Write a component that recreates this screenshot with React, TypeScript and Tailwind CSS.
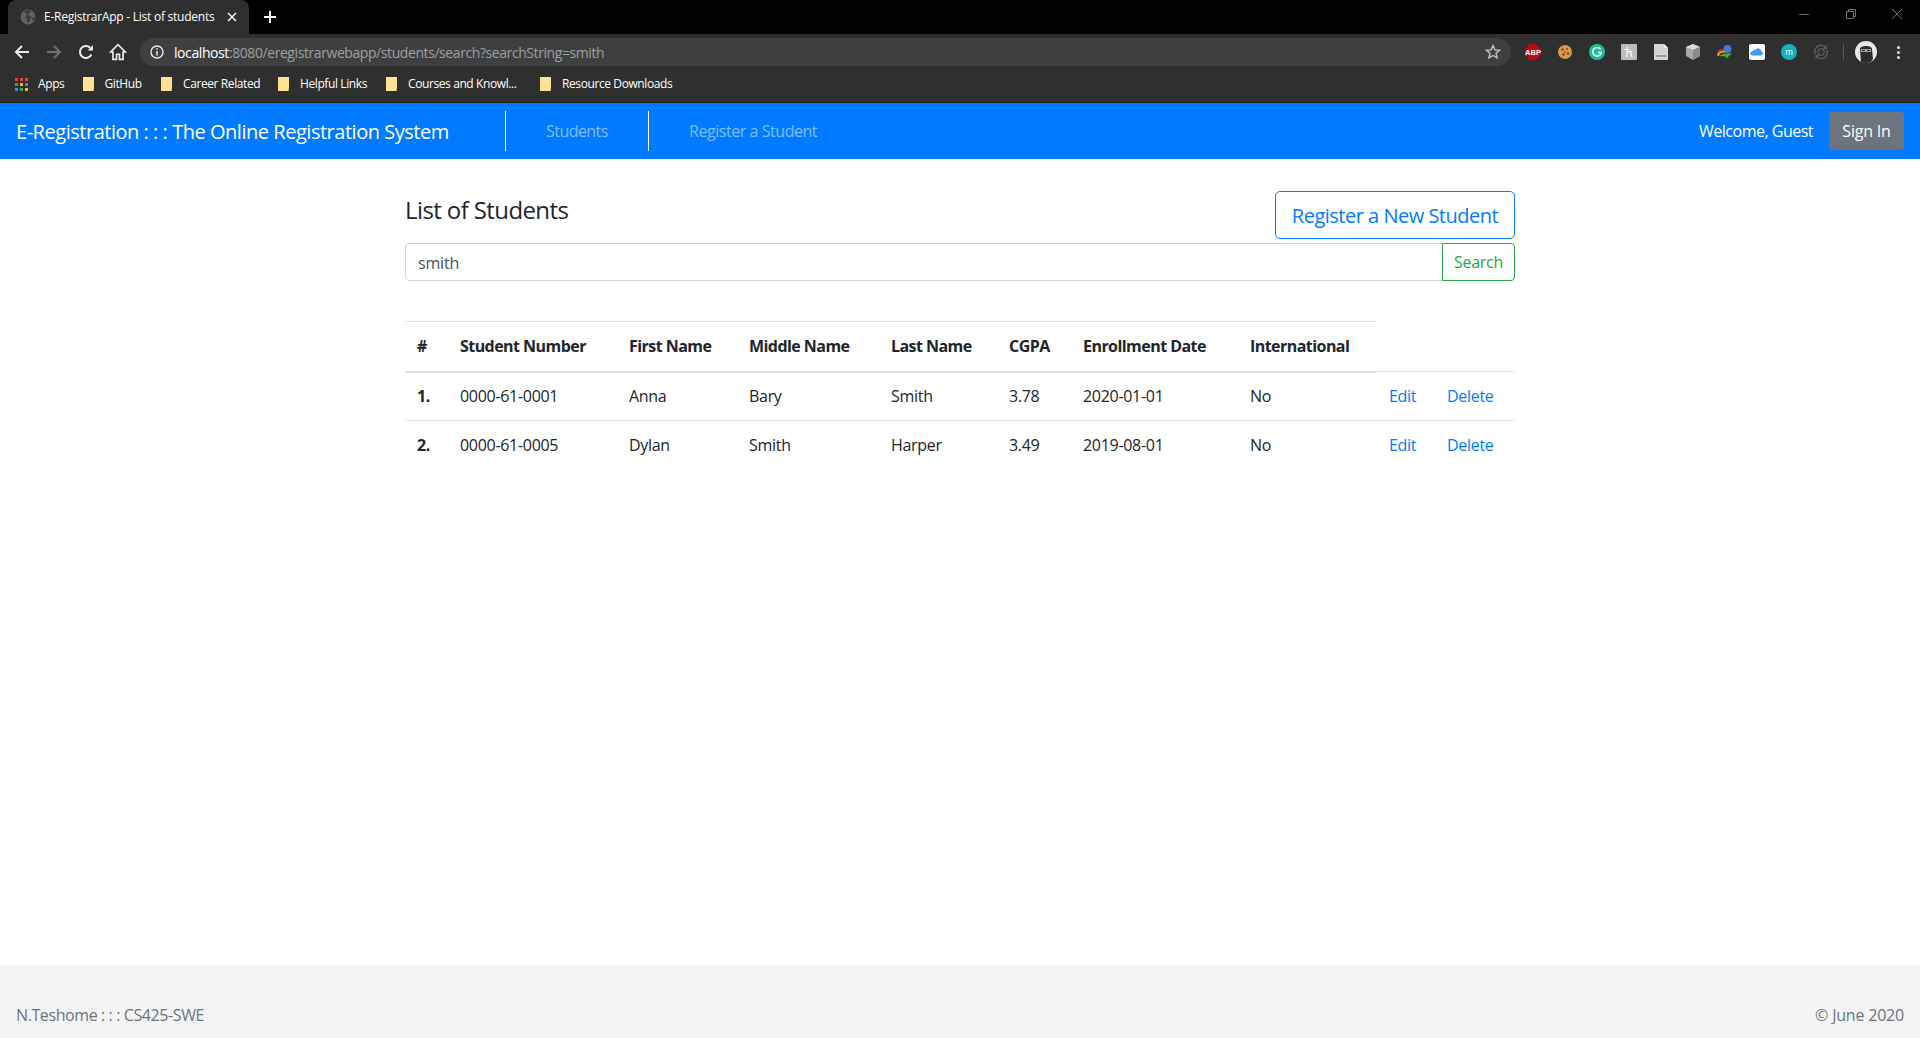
import React from "react";

const bookmarks = [
  { label: "GitHub", width: "w-[78.5px]" },
  { label: "Career Related", width: "w-[117px]" },
  { label: "Helpful Links", width: "w-[108px]" },
  { label: "Courses and Knowl...", width: "w-[154px]" },
  { label: "Resource Downloads", width: "w-[140px]" },
];

const students = [
  { n: "1.", num: "0000-61-0001", first: "Anna", middle: "Bary", last: "Smith", cgpa: "3.78", date: "2020-01-01", intl: "No" },
  { n: "2.", num: "0000-61-0005", first: "Dylan", middle: "Smith", last: "Harper", cgpa: "3.49", date: "2019-08-01", intl: "No" },
];

const headers = ["#", "Student Number", "First Name", "Middle Name", "Last Name", "CGPA", "Enrollment Date", "International"];

const Folder = () => (
  <svg width="12" height="14" viewBox="0 0 12 14" className="shrink-0">
    <path d="M0 0h11v11l-1 3H0z" fill="#fde293" />
    <path d="M11 11v3h-1.5z" fill="#d9b95c" />
  </svg>
);

const AppsGrid = () => (
  <svg width="13" height="13" viewBox="0 0 13 13" className="shrink-0">
    <rect x="0" y="0" width="3" height="3" fill="#ea4335" />
    <rect x="5" y="0" width="3" height="3" fill="#ea4335" />
    <rect x="10" y="0" width="3" height="3" fill="#ea4335" />
    <rect x="0" y="5" width="3" height="3" fill="#34a853" />
    <rect x="5" y="5" width="3" height="3" fill="#fbbc04" />
    <rect x="10" y="5" width="3" height="3" fill="#4285f4" />
    <rect x="0" y="10" width="3" height="3" fill="#4285f4" />
    <rect x="5" y="10" width="3" height="3" fill="#34a853" />
    <rect x="10" y="10" width="3" height="3" fill="#fbbc04" />
  </svg>
);

const ExtIcon = ({ children }: { children: React.ReactNode }) => (
  <div className="w-8 h-7 flex items-center justify-center">{children}</div>
);

const ToolIcon = ({ children }: { children: React.ReactNode }) => (
  <div className="w-8 h-7 flex items-center justify-center">{children}</div>
);

const BrowserChrome = () => (
  <div className="h-[103px] shrink-0 bg-[#2f2f2f] flex flex-col border-b border-[#1c1c1c] font-['Open_Sans',sans-serif]">
    {/* tab strip */}
    <div className="h-[34px] bg-black flex items-end relative">
      <div className="ml-2 w-[241px] h-[34px] bg-[#2f2f2f] rounded-t-lg flex items-center pl-3 pr-3 text-white">
        <svg width="16" height="16" viewBox="0 0 16 16" className="shrink-0">
          <circle cx="8" cy="8" r="7.5" fill="#5f6368" />
          <path d="M3 3l3 1 1 2-2 2 2 2v3l2 1 1-4 2-2-3-1-1-2 2-1 1-2-3-1zM12 9l2-1 1 2-2 3z" fill="#3a3b3d" />
        </svg>
        <span className="ml-[8px] text-[12px] tracking-[-0.25px] flex-1 whitespace-nowrap">E-RegistrarApp - List of students</span>
        <svg width="10" height="10" viewBox="0 0 10 10" className="shrink-0">
          <path d="M1 1l8 8M9 1l-8 8" stroke="#fff" strokeWidth="1.4" />
        </svg>
      </div>
      <div className="ml-[15px] self-center">
        <svg width="12" height="12" viewBox="0 0 12 12">
          <path d="M6 0v12M0 6h12" stroke="#fff" strokeWidth="2" />
        </svg>
      </div>
      <div className="absolute top-0 right-0 h-7 flex items-center text-[#6f6f6f]">
        <svg width="12" height="12" viewBox="0 0 12 12" className="mr-[35px]">
          <path d="M1 6.5h10" stroke="#6f6f6f" />
        </svg>
        <svg width="12" height="12" viewBox="0 0 12 12" className="mr-[34px]">
          <path d="M1.5 3.5h7v7h-7zM3.5 3.5v-2h7v7h-2" stroke="#6f6f6f" fill="none" />
        </svg>
        <svg width="12" height="12" viewBox="0 0 12 12" className="mr-[17px]">
          <path d="M1 1l10 10M11 1L1 11" stroke="#6f6f6f" />
        </svg>
      </div>
    </div>

    {/* toolbar */}
    <div className="h-9 flex items-center pl-[6px]">
      <ToolIcon>
        <svg width="16" height="16" viewBox="0 0 16 16">
          <path d="M15 8H2M8 2L2 8l6 6" stroke="#e8eaed" strokeWidth="2" fill="none" />
        </svg>
      </ToolIcon>
      <ToolIcon>
        <svg width="16" height="16" viewBox="0 0 16 16">
          <path d="M1 8h13M8 2l6 6-6 6" stroke="#727272" strokeWidth="2" fill="none" />
        </svg>
      </ToolIcon>
      <ToolIcon>
        <svg width="16" height="16" viewBox="0 0 16 16">
          <path d="M13.4 10.5A6 6 0 1 1 12.2 3.7" stroke="#e8eaed" strokeWidth="2" fill="none" />
          <path d="M9.5 6.5H15V1z" fill="#e8eaed" />
        </svg>
      </ToolIcon>
      <ToolIcon>
        <svg width="18" height="18" viewBox="0 0 16 16">
          <path d="M8 1.5L1.5 8H3.5v6.5h3.2V10h2.6v4.5h3.2V8h2z" stroke="#e8eaed" strokeWidth="1.5" fill="none" />
        </svg>
      </ToolIcon>
      <div className="ml-[6px] w-[1371px] h-7 rounded-full bg-[#3f3f3f] flex items-center pl-[10px] pr-[10px]">
        <svg width="14" height="14" viewBox="0 0 14 14" className="shrink-0">
          <circle cx="7" cy="7" r="6" stroke="#e8eaed" strokeWidth="1.4" fill="none" />
          <path d="M7 6v4.5M7 3.2v1.6" stroke="#e8eaed" strokeWidth="1.5" />
        </svg>
        <span className="ml-[10px] text-[14px] tracking-[-0.42px] whitespace-nowrap text-[#9aa0a6]">
          <span className="text-white">localhost</span>:8080/eregistrarwebapp/students/search?searchString=smith
        </span>
        <svg width="16" height="16" viewBox="0 0 16 16" className="ml-auto">
          <path d="M8 1.6l1.9 4.3 4.6.4-3.5 3 1.1 4.6L8 11.5l-4.100 2.400 1.100-4.600-3.500-3 4.600-.4z" stroke="#c4c7c5" strokeWidth="1.4" fill="none" />
        </svg>
      </div>
      <div className="ml-[6px] flex items-center">
        <ExtIcon>
          <svg width="16" height="16" viewBox="0 0 16 16">
            <path d="M5 0h6l5 5v6l-5 5H5l-5-5V5z" fill="#c0090b" />
            <text x="8" y="10.800" textAnchor="middle" fontSize="7.500" fontWeight="700" fill="#fff" fontFamily="Liberation Sans">ABP</text>
          </svg>
        </ExtIcon>
        <ExtIcon>
          <svg width="16" height="16" viewBox="0 0 16 16">
            <circle cx="8" cy="8" r="7" fill="#d99a4e" />
            <circle cx="5.500" cy="5.500" r="1.200" fill="#7b4a1c" />
            <circle cx="10" cy="5" r="1" fill="#7b4a1c" />
            <circle cx="11" cy="9.500" r="1.200" fill="#7b4a1c" />
            <circle cx="6.500" cy="10.500" r="1.200" fill="#7b4a1c" />
            <circle cx="8" cy="8" r=".8" fill="#7b4a1c" />
          </svg>
        </ExtIcon>
        <ExtIcon>
          <svg width="16" height="16" viewBox="0 0 16 16">
            <circle cx="8" cy="8" r="8" fill="#15c39a" />
            <path d="M11.500 5.200A4.300 4.300 0 1 0 12.300 8.500H8.800" stroke="#fff" strokeWidth="1.500" fill="none" />
          </svg>
        </ExtIcon>
        <ExtIcon>
          <svg width="16" height="16" viewBox="0 0 16 16">
            <rect width="16" height="16" rx="1" fill="#bdbdbd" />
            <path d="M6 3v10M3.500 5.500H8.500M6 8.500l3-1.500c2 0 1.500 2 .5 2.500l1.500 3.500" stroke="#fff" strokeWidth="1.200" fill="none" />
          </svg>
        </ExtIcon>
        <ExtIcon>
          <svg width="14" height="16" viewBox="0 0 14 16">
            <path d="M0 0h10l4 4v12H0z" fill="#d4d4d4" />
            <path d="M10 0l4 4h-4z" fill="#f1f1f1" />
            <rect x="2" y="11" width="10" height="2" fill="#9a9a9a" />
          </svg>
        </ExtIcon>
        <ExtIcon>
          <svg width="16" height="16" viewBox="0 0 16 16">
            <path d="M8 0l7 3v9l-7 4-7-4V3z" fill="#a8a8a8" />
            <path d="M8 0l7 3-7 3-7-3z" fill="#dcdcdc" />
            <path d="M8 6v10l7-4V3z" fill="#8a8a8a" />
          </svg>
        </ExtIcon>
        <ExtIcon>
          <svg width="16" height="16" viewBox="0 0 16 16">
            <circle cx="10.500" cy="5" r="4" fill="#3f7fd1" />
            <path d="M0 11c1-5 5-6 8-5" stroke="#d93a2b" strokeWidth="1.500" fill="none" />
            <path d="M1 12c1-4 4-5 7-4" stroke="#f0c02f" strokeWidth="1.500" fill="none" />
            <path d="M6 10l9-1-6 6 0-2.500-7-.5z" fill="#4caf32" />
          </svg>
        </ExtIcon>
        <ExtIcon>
          <svg width="16" height="16" viewBox="0 0 16 16">
            <rect width="16" height="16" rx="2" fill="#fff" />
            <path d="M3.500 11.500a2 2 0 0 1-.2-4 3 3 0 0 1 3.200-1.800 3.400 3.400 0 0 1 6 1.600 2.200 2.200 0 0 1-.2 4.200z" fill="#3b9bf0" />
          </svg>
        </ExtIcon>
        <ExtIcon>
          <svg width="16" height="16" viewBox="0 0 16 16">
            <circle cx="8" cy="8" r="8" fill="#0fb3c4" />
            <text x="8" y="11" textAnchor="middle" fontSize="9" fill="#fff" fontFamily="Liberation Sans">m</text>
          </svg>
        </ExtIcon>
        <ExtIcon>
          <svg width="16" height="16" viewBox="0 0 16 16">
            <path d="M2.500 10A6 6 0 0 1 12.500 3.500M13.500 6A6 6 0 0 1 3.500 12.500" stroke="#5f5f5f" strokeWidth="1.500" fill="none" />
            <path d="M13.500 1v4h-4zM2.500 15v-4h4z" fill="#5f5f5f" />
            <circle cx="8" cy="8" r="3.200" stroke="#5f5f5f" strokeWidth="1.200" fill="none" />
          </svg>
        </ExtIcon>
      </div>
      <div className="ml-[6px] w-px h-4 bg-[#5a5a5a]" />
      <div className="ml-[11px] w-[22px] h-[22px] rounded-full bg-[#e8e8e8] flex items-center justify-center overflow-hidden">
        <svg width="22" height="22" viewBox="0 0 22 22">
          <path d="M5 8c0-4 12-4 12 0l1 10-3 4H6z" fill="#2b2b2b" />
          <rect x="6" y="8" width="10" height="3" fill="#c9a27e" />
          <rect x="7" y="9" width="3" height="1" fill="#222" />
          <rect x="12" y="9" width="3" height="1" fill="#222" />
        </svg>
      </div>
      <div className="ml-5 w-[3px] flex flex-col gap-[2px]">
        <div className="w-[3px] h-[3px] rounded-full bg-[#e8eaed]" />
        <div className="w-[3px] h-[3px] rounded-full bg-[#e8eaed]" />
        <div className="w-[3px] h-[3px] rounded-full bg-[#e8eaed]" />
      </div>
    </div>

    {/* bookmarks */}
    <div className="h-7 flex items-center pl-[15px] text-[12px] tracking-[-0.4px] text-white whitespace-nowrap">
      <div className="w-[67.5px] flex items-center">
        <AppsGrid />
        <span className="ml-[10px]">Apps</span>
      </div>
      {bookmarks.map((b) => (
        <div key={b.label} className={`${b.width} flex items-center`}>
          <Folder />
          <span className="ml-[10px]">{b.label}</span>
        </div>
      ))}
    </div>
  </div>
);

const App = () => {
  return (
    <div className="h-screen w-full flex flex-col bg-white overflow-hidden text-[16px] text-[#212529] font-['Open_Sans',sans-serif]">
      <BrowserChrome />

      <nav className="h-14 shrink-0 bg-[#007bff] flex items-center pl-4 pr-4">
        <span className="text-[20px] tracking-[-0.47px] pt-[2px] text-white whitespace-nowrap w-[489px]">E-Registration : : : The Online Registration System</span>
        <a className="h-10 px-10 w-[143px] flex items-center border-l border-white text-white/50 tracking-[-0.55px] whitespace-nowrap">Students</a>
        <a className="h-10 px-10 flex items-center border-l border-white text-white/50 tracking-[-0.45px] whitespace-nowrap">Register a Student</a>
        <span className="ml-auto text-white tracking-[-0.5px] whitespace-nowrap">Welcome, Guest</span>
        <button className="ml-4 h-[38px] w-[75px] rounded bg-[#6c757d] text-white tracking-[-0.2px]">Sign In</button>
      </nav>

      <main className="flex-1 w-[1110px] mx-auto pt-8">
        <div className="flex items-start justify-between">
          <h4 className="text-[24px] leading-[1.2] pt-[5px] tracking-[-0.6px]">List of Students</h4>
          <button className="h-12 w-[240px] pt-px rounded-[5px] border border-[#007bff] text-[#007bff] text-[20px] tracking-[-0.5px]">Register a New Student</button>
        </div>
        <div className="mt-1 flex h-[38px]">
          <div className="flex-1 border border-[#ced4da] rounded-l px-3 pt-px flex items-center text-[#495057] tracking-[-0.2px]">smith</div>
          <button className="w-[73px] -ml-px border border-[#28a745] rounded-r text-[#28a745] tracking-[-0.3px]">Search</button>
        </div>

        <table className="mt-10 w-full table-fixed border-collapse tracking-[-0.3px]">
          <colgroup>
            <col className="w-[43px]" />
            <col className="w-[169px]" />
            <col className="w-[120px]" />
            <col className="w-[142px]" />
            <col className="w-[118px]" />
            <col className="w-[74px]" />
            <col className="w-[167px]" />
            <col className="w-[138px]" />
            <col className="w-[59px]" />
            <col className="w-[80px]" />
          </colgroup>
          <thead>
            <tr>
              {headers.map((h) => (
                <th key={h} className="h-[50px] px-3 text-left font-bold tracking-[-0.55px] border-t border-b-2 border-[#dee2e6] whitespace-nowrap">{h}</th>
              ))}
            </tr>
          </thead>
          <tbody>
            {students.map((s) => (
              <tr key={s.num}>
                <td className="h-[49px] px-3 font-bold border-t border-[#dee2e6]">{s.n}</td>
                <td className="px-3 border-t border-[#dee2e6]">{s.num}</td>
                <td className="px-3 border-t border-[#dee2e6]">{s.first}</td>
                <td className="px-3 border-t border-[#dee2e6]">{s.middle}</td>
                <td className="px-3 border-t border-[#dee2e6]">{s.last}</td>
                <td className="px-3 border-t border-[#dee2e6]">{s.cgpa}</td>
                <td className="px-3 border-t border-[#dee2e6]">{s.date}</td>
                <td className="px-3 border-t border-[#dee2e6]">{s.intl}</td>
                <td className="px-3 pl-[13px] border-t border-[#dee2e6] text-[#007bff]">Edit</td>
                <td className="px-3 border-t border-[#dee2e6] text-[#007bff]">Delete</td>
              </tr>
            ))}
          </tbody>
        </table>
      </main>

      <footer className="h-[73px] shrink-0 bg-[#f4f4f4] flex items-end justify-between px-4 pb-[11px] text-[#6c757d] tracking-[-0.4px]">
        <span>N.Teshome : : : CS425-SWE</span>
        <span className="tracking-[-0.2px]">© June 2020</span>
      </footer>
    </div>
  );
};

export default App;
